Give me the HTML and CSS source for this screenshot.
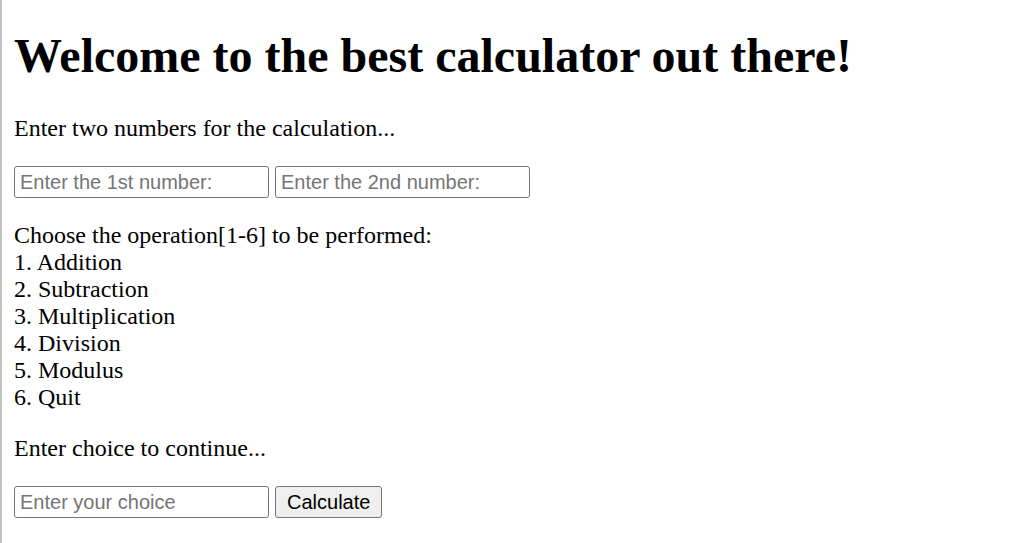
FILE: index.html
```html
<!DOCTYPE html>
<html lang="en">
<head>
    <meta charset="UTF-8">
    <meta name="viewport" content="width=device-width, initial-scale=1.0">
    <title>Calculator</title>
    <link rel="stylesheet" href="styles.css">
</head>
<body>

    <h1>Welcome to the best calculator out there!</h1>

    <p>Enter two numbers for the calculation...</p>

    <div class="input-row">
        <input type="text" id="num1" placeholder="Enter the 1st number:">
        <input type="text" id="num2" placeholder="Enter the 2nd number:">
    </div>

    <p class="menu">
        Choose the operation[1-6] to be performed:<br>
        1. Addition<br>
        2. Subtraction<br>
        3. Multiplication<br>
        4. Division<br>
        5. Modulus<br>
        6. Quit
    </p>

    <p>Enter choice to continue...</p>

    <div class="input-row">
        <input type="text" id="choice" placeholder="Enter your choice">
        <button type="button">Calculate</button>
    </div>

</body>
</html>
```

FILE: styles.css
```css
html {
    border-left: 2px solid #c2c2c2;
    min-height: 100%;
    box-sizing: border-box;
}

body {
    font-family: 'Liberation Serif', 'Times New Roman', serif;
    font-size: 24px;
    line-height: 27px;
    color: #000;
    margin: 12px 12px;
}

h1 {
    font-size: 48px;
    font-weight: 700;
    line-height: 55px;
    margin: 16px 0 32px;
}

p {
    margin: 24px 0;
}

.input-row {
    display: flex;
    gap: 6px;
    align-items: center;
}

.input-row input {
    width: 255px;
    height: 32px;
    box-sizing: border-box;
    padding: 0 5px;
    border: 1px solid #767676;
    border-radius: 3px;
    font-family: 'Liberation Sans', Arial, sans-serif;
    font-size: 20px;
    color: #000;
}

.input-row input::placeholder {
    color: #757575;
}

.input-row button {
    height: 32px;
    box-sizing: border-box;
    padding: 0 11px;
    border: 1px solid #767676;
    border-radius: 3px;
    background-color: #efefef;
    font-family: 'Liberation Sans', Arial, sans-serif;
    font-size: 20px;
    color: #000;
}
```
